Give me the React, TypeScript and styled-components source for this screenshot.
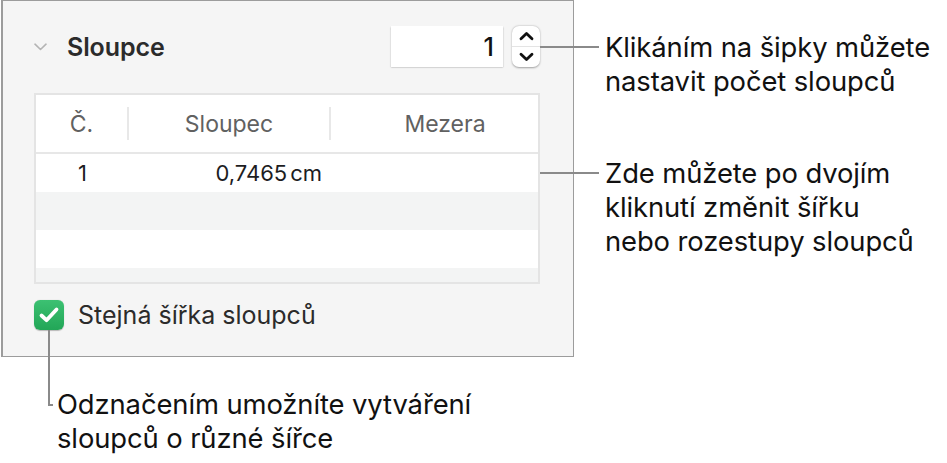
import styled, { createGlobalStyle } from "styled-components";

const GlobalStyle = createGlobalStyle`
  html, body {
    margin: 0;
    padding: 0;
    background: #fff;
  }
  body {
    font-family: Inter, "Noto Sans", "Liberation Sans", sans-serif;
    color: #1d1d1f;
  }
`;

const Page = styled.div`
  width: 947px;
  height: 463px;
  overflow: hidden;
  display: flex;
  flex-direction: column;
`;

const TopRow = styled.div`
  display: flex;
  align-items: flex-start;
`;

const Panel = styled.div`
  width: 573px;
  height: 357px;
  box-sizing: border-box;
  margin-left: 1px;
  background: #f5f5f5;
  border: 1px solid #9c9c9c;
  border-left-width: 2px;
  padding: 24px 33px 0 31px;
  display: flex;
  flex-direction: column;
`;

const Header = styled.div`
  display: flex;
  align-items: center;
  height: 43px;
`;

const Disclosure = styled.svg`
  width: 13px;
  height: 8px;
  margin-right: 20px;
`;

const Title = styled.div`
  flex: 1;
  font-size: 25px;
  font-weight: 600;
  color: #2b2b2b;
  letter-spacing: -0.1px;
`;

const NumberField = styled.div`
  width: 112px;
  height: 41px;
  box-sizing: border-box;
  background: #fff;
  box-shadow: 0 0.5px 1.5px rgba(0, 0, 0, 0.35);
  display: flex;
  align-items: center;
  justify-content: flex-end;
  padding-right: 9px;
  font-size: 25px;
  font-weight: 500;
  color: #111;
`;

const Stepper = styled.div`
  width: 28px;
  height: 41px;
  margin-left: 9px;
  border-radius: 7px;
  background: #fff;
  box-shadow: 0 0.5px 2px rgba(0, 0, 0, 0.35);
  display: flex;
  flex-direction: column;
`;

const StepHalf = styled.div<{ $top?: boolean }>`
  flex: 1;
  display: flex;
  align-items: center;
  justify-content: center;
  border-bottom: ${(p) => (p.$top ? "1px solid #e4e4e4" : "none")};
`;

const Table = styled.div`
  margin-top: 25px;
  width: 506px;
  height: 191px;
  box-sizing: border-box;
  border: 2px solid #e4e4e4;
  background: #fff;
  overflow: hidden;
  display: flex;
  flex-direction: column;
`;

const HeadRow = styled.div`
  display: grid;
  grid-template-columns: 93px 202px 1fr;
  height: 57px;
  align-items: center;
  border-bottom: 2px solid #e7e7e7;
  flex-shrink: 0;
`;

const HeadCell = styled.div<{ $sep?: boolean; $pad?: number }>`
  height: 33px;
  display: flex;
  align-items: center;
  justify-content: center;
  padding-left: ${(p) => p.$pad ?? 0}px;
  font-size: 23px;
  color: #616161;
  border-right: ${(p) => (p.$sep ? "2px solid #e8e8e8" : "none")};
`;

const Row = styled.div<{ $alt?: boolean }>`
  display: grid;
  grid-template-columns: 93px 202px 1fr;
  height: 38px;
  flex-shrink: 0;
  align-items: center;
  background: ${(p) => (p.$alt ? "#f3f4f4" : "#fff")};
`;

const Cell = styled.div<{ $align: "center" | "right" }>`
  text-align: ${(p) => p.$align};
  padding-right: ${(p) => (p.$align === "right" ? 9 : 0)}px;
  font-size: 22px;
  color: #1d1d1f;
`;

const Unit = styled.span`
  margin-left: 3px;
`;

const CheckRow = styled.div`
  display: flex;
  align-items: center;
  margin-top: 16px;
`;

const CheckBox = styled.div`
  width: 30px;
  height: 30px;
  border-radius: 6px;
  background: linear-gradient(#3cc172, #22a657);
  box-shadow: 0 0.5px 1px rgba(0, 0, 0, 0.25);
  display: flex;
  align-items: center;
  justify-content: center;
  margin-right: 14px;
`;

const CheckLabel = styled.div`
  font-size: 25px;
  color: #2b2b2b;
`;

const Callouts = styled.div`
  display: flex;
  flex-direction: column;
`;

const Callout = styled.div<{ $top: number }>`
  display: flex;
  align-items: flex-start;
  margin-top: ${(p) => p.$top}px;
`;

const HLeader = styled.div`
  width: 59px;
  height: 2px;
  margin-left: -34px;
  margin-top: 16px;
  margin-right: 6px;
  background: #8a8a8a;
  flex-shrink: 0;
`;

const Note = styled.div`
  font-size: 27.4px;
  line-height: 34px;
  color: #111;
  letter-spacing: -0.1px;
  white-space: nowrap;
`;

const BottomCallout = styled.div`
  display: flex;
  align-items: flex-start;
  margin-left: 48px;
  margin-top: 30px;
`;

const VLeader = styled.div`
  width: 2px;
  height: 76px;
  margin-top: -57px;
  background: #8a8a8a;
  position: relative;
  flex-shrink: 0;
  margin-right: 7px;
  &::after {
    content: "";
    position: absolute;
    left: 0;
    bottom: 0;
    width: 5px;
    height: 2px;
    background: #8a8a8a;
  }
`;

const rows = [
  { n: "1", width: "0,7465", unit: "cm" },
  { n: "", width: "", unit: "" },
  { n: "", width: "", unit: "" },
  { n: "", width: "", unit: "" },
];

export default function App() {
  return (
    <Page>
      <GlobalStyle />
      <TopRow>
        <Panel>
          <Header>
            <Disclosure viewBox="0 0 13 8">
              <path d="M1 1.2 L6.5 6.5 L12 1.2" fill="none" stroke="#b4b4b4" strokeWidth="1.6" strokeLinecap="round" strokeLinejoin="round" />
            </Disclosure>
            <Title>Sloupce</Title>
            <NumberField>1</NumberField>
            <Stepper>
              <StepHalf $top>
                <svg width="15" height="10" viewBox="0 0 15 10">
                  <path d="M2 7.8 L7.5 2.4 L13 7.8" fill="none" stroke="#111" strokeWidth="2.8" strokeLinecap="round" strokeLinejoin="round" />
                </svg>
              </StepHalf>
              <StepHalf>
                <svg width="15" height="10" viewBox="0 0 15 10">
                  <path d="M2 2.2 L7.5 7.6 L13 2.2" fill="none" stroke="#111" strokeWidth="2.8" strokeLinecap="round" strokeLinejoin="round" />
                </svg>
              </StepHalf>
            </Stepper>
          </Header>
          <Table>
            <HeadRow>
              <HeadCell $sep>Č.</HeadCell>
              <HeadCell $sep>Sloupec</HeadCell>
              <HeadCell $pad={21}>Mezera</HeadCell>
            </HeadRow>
            {rows.map((r, i) => (
              <Row key={i} $alt={i % 2 === 1}>
                <Cell $align="center">{r.n}</Cell>
                <Cell $align="right">
                  {r.width}
                  {r.unit && <Unit>{r.unit}</Unit>}
                </Cell>
                <Cell $align="center" />
              </Row>
            ))}
          </Table>
          <CheckRow>
            <CheckBox>
              <svg width="22" height="18" viewBox="0 0 22 18">
                <path d="M3.5 9.5 L8.5 14.2 L18.5 3.5" fill="none" stroke="#fff" strokeWidth="3.8" strokeLinecap="round" strokeLinejoin="round" />
              </svg>
            </CheckBox>
            <CheckLabel>Stejná šířka sloupců</CheckLabel>
          </CheckRow>
        </Panel>
        <Callouts>
          <Callout $top={30}>
            <HLeader />
            <Note>
              Klikáním na šipky můžete
              <br />
              nastavit počet sloupců
            </Note>
          </Callout>
          <Callout $top={58}>
            <HLeader />
            <Note>
              Zde můžete po dvojím
              <br />
              kliknutí změnit šířku
              <br />
              nebo rozestupy sloupců
            </Note>
          </Callout>
        </Callouts>
      </TopRow>
      <BottomCallout>
        <VLeader />
        <Note>
          Odznačením umožníte vytváření
          <br />
          sloupců o různé šířce
        </Note>
      </BottomCallout>
    </Page>
  );
}
